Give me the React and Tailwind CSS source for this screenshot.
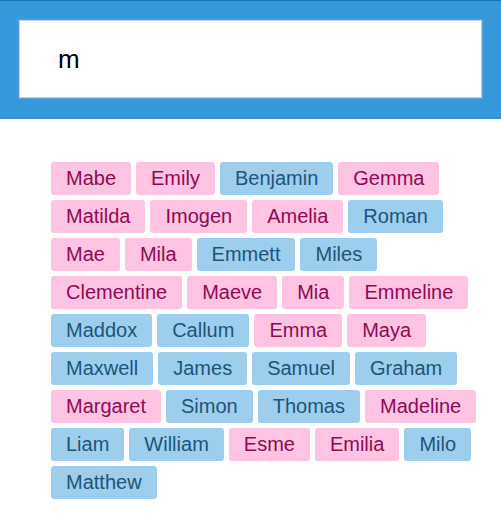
import { useState } from "react";

const GIRL = "bg-[#ffc4e4] text-[#8f0a54]";
const BOY = "bg-[#9dceee] text-[#1d5478]";

const names = [
  ["Mabe", "g"], ["Emily", "g"], ["Benjamin", "b"], ["Gemma", "g"],
  ["Matilda", "g"], ["Imogen", "g"], ["Amelia", "g"], ["Roman", "b"],
  ["Mae", "g"], ["Mila", "g"], ["Emmett", "b"], ["Miles", "b"],
  ["Clementine", "g"], ["Maeve", "g"], ["Mia", "g"], ["Emmeline", "g"],
  ["Maddox", "b"], ["Callum", "b"], ["Emma", "g"], ["Maya", "g"],
  ["Maxwell", "b"], ["James", "b"], ["Samuel", "b"], ["Graham", "b"],
  ["Margaret", "g"], ["Simon", "b"], ["Thomas", "b"], ["Madeline", "g"],
  ["Liam", "b"], ["William", "b"], ["Esme", "g"], ["Emilia", "g"], ["Milo", "b"],
  ["Matthew", "b"],
];

export default function App() {
  const [query, setQuery] = useState("m");
  const shown = names.filter(([name]) => name.toLowerCase().includes(query.toLowerCase()));

  return (
    <div className="bg-white font-['Liberation_Sans',Arial,sans-serif]">
      <header className="border-t border-b-2 border-t-[#1f74ae] border-b-[#3a8cc8] bg-[#3498db] px-[19px] pt-[19px] pb-[19px]">
        <input
          type="text"
          aria-label="Filter names"
          value={query}
          onChange={(e) => setQuery(e.target.value)}
          className="block h-[78px] w-full border border-[#b5d5f5] bg-white px-[38px] text-[26px] text-black shadow-[0_0_2px_1px_#5f9fd6] outline-none"
        />
      </header>
      <main className="pt-[43px] pr-5 pb-5 pl-[51px]">
        <ul className="flex flex-wrap gap-[5px]">
          {shown.map(([name, kind]) => (
            <li
              key={name}
              className={`rounded-[3px] px-[15px] text-[20px] leading-[33px] ${kind === "g" ? GIRL : BOY}`}
            >
              {name}
            </li>
          ))}
        </ul>
      </main>
    </div>
  );
}
